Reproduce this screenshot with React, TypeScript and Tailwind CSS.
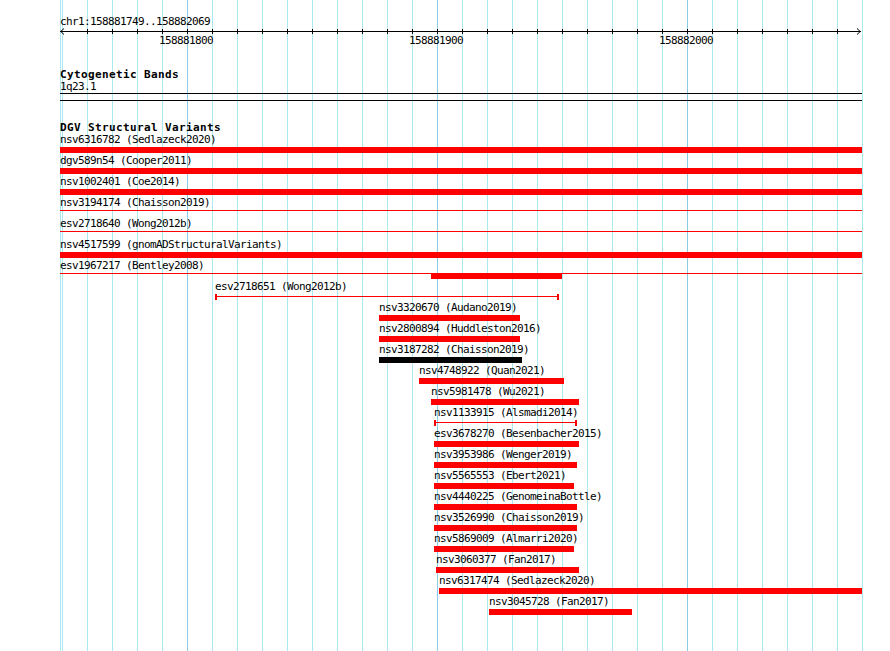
type Kind = "thick" | "thin" | "capped" | "black";

type Feature = {
  label: string;
  start: number;
  end: number;
  kind: Kind;
  extra?: { start: number; end: number };
};

const VIEW_LEFT = 60;
const VIEW_RIGHT = 862;

const features: Feature[] = [
  { label: "nsv6316782 (Sedlazeck2020)", start: 60, end: 862, kind: "thick" },
  { label: "dgv589n54 (Cooper2011)", start: 60, end: 862, kind: "thick" },
  { label: "nsv1002401 (Coe2014)", start: 60, end: 862, kind: "thick" },
  { label: "nsv3194174 (Chaisson2019)", start: 60, end: 862, kind: "thin" },
  { label: "esv2718640 (Wong2012b)", start: 60, end: 862, kind: "thin" },
  { label: "nsv4517599 (gnomADStructuralVariants)", start: 60, end: 862, kind: "thick" },
  {
    label: "esv1967217 (Bentley2008)",
    start: 60,
    end: 862,
    kind: "thin",
    extra: { start: 431, end: 562 },
  },
  { label: "esv2718651 (Wong2012b)", start: 215, end: 559, kind: "capped" },
  { label: "nsv3320670 (Audano2019)", start: 379, end: 520, kind: "thick" },
  { label: "nsv2800894 (Huddleston2016)", start: 379, end: 520, kind: "thick" },
  { label: "nsv3187282 (Chaisson2019)", start: 379, end: 522, kind: "black" },
  { label: "nsv4748922 (Quan2021)", start: 419, end: 564, kind: "thick" },
  { label: "nsv5981478 (Wu2021)", start: 431, end: 579, kind: "thick" },
  { label: "nsv1133915 (Alsmadi2014)", start: 434, end: 577, kind: "capped" },
  { label: "esv3678270 (Besenbacher2015)", start: 434, end: 579, kind: "thick" },
  { label: "nsv3953986 (Wenger2019)", start: 434, end: 577, kind: "thick" },
  { label: "nsv5565553 (Ebert2021)", start: 434, end: 574, kind: "thick" },
  { label: "nsv4440225 (GenomeinaBottle)", start: 434, end: 577, kind: "thick" },
  { label: "nsv3526990 (Chaisson2019)", start: 434, end: 577, kind: "thick" },
  { label: "nsv5869009 (Almarri2020)", start: 434, end: 574, kind: "thick" },
  { label: "nsv3060377 (Fan2017)", start: 436, end: 579, kind: "thick" },
  { label: "nsv6317474 (Sedlazeck2020)", start: 439, end: 862, kind: "thick" },
  { label: "nsv3045728 (Fan2017)", start: 489, end: 632, kind: "thick" },
];

// grid: one line every 10bp (25px), darker every 100bp
const gridLines = Array.from({ length: 33 }, (_, k) => ({
  x: 62 + 25 * k,
  major: k % 10 === 5,
}));

const tickLabels = ["158881800", "158881900", "158882000"];

function Bar({ f }: { f: Feature }) {
  if (f.kind === "thin") {
    return (
      <div className="relative h-[6px]">
        <div className="mt-[2px] h-px bg-[#ff0000]" />
        {f.extra ? (
          <div
            className="absolute top-0 h-[6px] bg-[#ff0000]"
            style={{ left: f.extra.start - f.start, width: f.extra.end - f.extra.start }}
          />
        ) : null}
      </div>
    );
  }
  if (f.kind === "capped") {
    return (
      <div className="flex h-[6px] items-start">
        <div className="h-[6px] w-[2px] bg-[#ff0000]" />
        <div className="mt-[2px] h-px flex-1 bg-[#ff0000]" />
        <div className="h-[6px] w-[2px] bg-[#ff0000]" />
      </div>
    );
  }
  return <div className={f.kind === "black" ? "h-[6px] bg-black" : "h-[6px] bg-[#ff0000]"} />;
}

function Ruler() {
  const w = VIEW_RIGHT - VIEW_LEFT;
  return (
    <svg width={w} height={7} className="block" shapeRendering="crispEdges">
      <line x1={0} y1={3.5} x2={w - 1} y2={3.5} stroke="#000" strokeWidth={1} />
      {gridLines.slice(1, 32).map((g) => (
        <line
          key={g.x}
          x1={g.x - VIEW_LEFT + 0.5}
          y1={1}
          x2={g.x - VIEW_LEFT + 0.5}
          y2={6}
          stroke="#000"
          strokeWidth={1}
        />
      ))}
      <polyline points="4,0.5 0.8,3.5 4,6.5" fill="none" stroke="#000" strokeWidth={1} shapeRendering="auto" />
      <polyline
        points={`${w - 5},0.5 ${w - 1.8},3.5 ${w - 5},6.5`}
        fill="none"
        stroke="#000"
        strokeWidth={1}
        shapeRendering="auto"
      />
    </svg>
  );
}

export default function App() {
  return (
    <div className="relative h-[651px] w-[890px] overflow-hidden bg-white font-['DejaVu_Sans_Mono',monospace] text-[11px] leading-[11px] tracking-[-0.62px] text-black">
      {/* background grid */}
      <div className="pointer-events-none absolute inset-0">
        <div className="absolute top-0 bottom-0 left-[60px] w-px bg-[#ace8f0]" />
        {gridLines.map((g) => (
          <div
            key={g.x}
            className={
              g.major
                ? "absolute top-0 bottom-0 w-px bg-[#8ccbe8]"
                : "absolute top-0 bottom-0 w-px bg-[#ace8f0]"
            }
            style={{ left: g.x }}
          />
        ))}
      </div>

      <div className="relative">
        {/* ruler */}
        <div className="ml-[60px] w-[802px]">
          <div className="mt-[16px] h-[11px] whitespace-nowrap">chr1:158881749..158882069</div>
          <div className="mt-px">
            <Ruler />
          </div>
          <div className="flex h-[11px] pl-[99px]">
            {tickLabels.map((t) => (
              <div key={t} className="w-[250px] shrink-0 whitespace-nowrap">
                {t}
              </div>
            ))}
          </div>
        </div>

        {/* cytogenetic bands */}
        <div className="ml-[60px] mt-[23px] w-[802px]">
          <div className="h-[11px] font-bold tracking-[0.38px]">Cytogenetic Bands</div>
          <div className="mt-px h-[11px]">1q23.1</div>
          <div className="mt-px h-px bg-black" />
          <div className="mt-[6px] h-px bg-black" />
        </div>

        {/* structural variants */}
        <div className="ml-[60px] mt-[21px] w-[802px]">
          <div className="h-[11px] font-bold tracking-[0.38px]">DGV Structural Variants</div>
          <div className="mt-px">
            {features.map((f) => (
              <div
                key={f.label}
                className="h-[21px]"
                style={{ marginLeft: f.start - VIEW_LEFT, width: f.end - f.start }}
              >
                <div className="h-[11px] whitespace-nowrap">{f.label}</div>
                <div className="mt-[2px]">
                  <Bar f={f} />
                </div>
              </div>
            ))}
          </div>
        </div>
      </div>
    </div>
  );
}
